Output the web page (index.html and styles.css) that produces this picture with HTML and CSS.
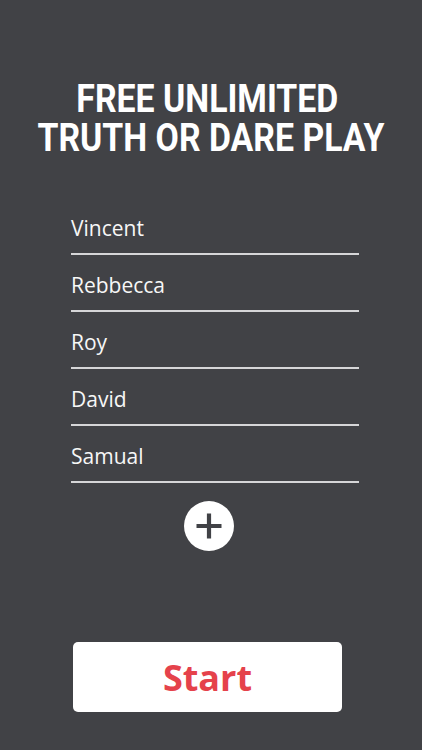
FILE: index.html
```html
<!DOCTYPE html>
<html lang="en">
<head>
<meta charset="utf-8">
<title>Truth or Dare</title>
<link rel="stylesheet" href="styles.css">
</head>
<body>
<main class="screen">
  <h1 class="title"><span class="title-line title-line-first">FREE UNLIMITED</span><span class="title-line">TRUTH OR DARE PLAY</span></h1>
  <ul class="players">
    <li class="player">Vincent</li>
    <li class="player">Rebbecca</li>
    <li class="player">Roy</li>
    <li class="player">David</li>
    <li class="player">Samual</li>
  </ul>
  <button class="add" aria-label="Add player">
    <svg width="50" height="50" viewBox="0 0 50 50"><circle cx="25" cy="25" r="25" fill="#ffffff"/><path d="M12.5 25H37.5M25 12.5V37.5" stroke="#414246" stroke-width="4.2"/></svg>
  </button>
  <button class="start">Start</button>
</main>
</body>
</html>
```
FILE: styles.css
```css
html, body {
  margin: 0;
  padding: 0;
  background: #414246;
}
.screen {
  height: 750px;
  display: flex;
  flex-direction: column;
  align-items: center;
  box-sizing: border-box;
  padding-top: 80px;
  padding-bottom: 38px;
}
.title {
  margin: 0;
  font-family: Roboto, "Liberation Sans", sans-serif;
  font-weight: 700;
  font-size: 38px;
  line-height: 39px;
  color: #ffffff;
  text-align: center;
  display: flex;
  flex-direction: column;
  align-items: center;
  transform: scaleX(0.89);
  white-space: nowrap;
}
.title-line {
  display: block;
}
.title-line-first {
  padding-right: 8px;
}
.players {
  list-style: none;
  margin: 40px 0 0 0;
  padding: 0;
  width: 288px;
  align-self: flex-start;
  margin-left: 71px;
}
.player {
  font-family: "Open Sans", "Liberation Sans", sans-serif;
  font-size: 21px;
  line-height: 28px;
  color: #f7f7f7;
  padding: 16px 0 11px 0;
  border-bottom: 2px solid #d6d6d8;
}
.add {
  margin-top: 18px;
  margin-right: 4px;
  width: 50px;
  height: 50px;
  padding: 0;
  border: 0;
  background: transparent;
  display: block;
}
.add svg {
  display: block;
}
.start {
  margin-top: auto;
  margin-left: -7px;
  width: 269px;
  height: 70px;
  border: 0;
  border-radius: 5px;
  background: #ffffff;
  color: #e5424b;
  font-family: "Open Sans", "Liberation Sans", sans-serif;
  font-weight: 700;
  font-size: 36px;
  padding: 0;
}
```
